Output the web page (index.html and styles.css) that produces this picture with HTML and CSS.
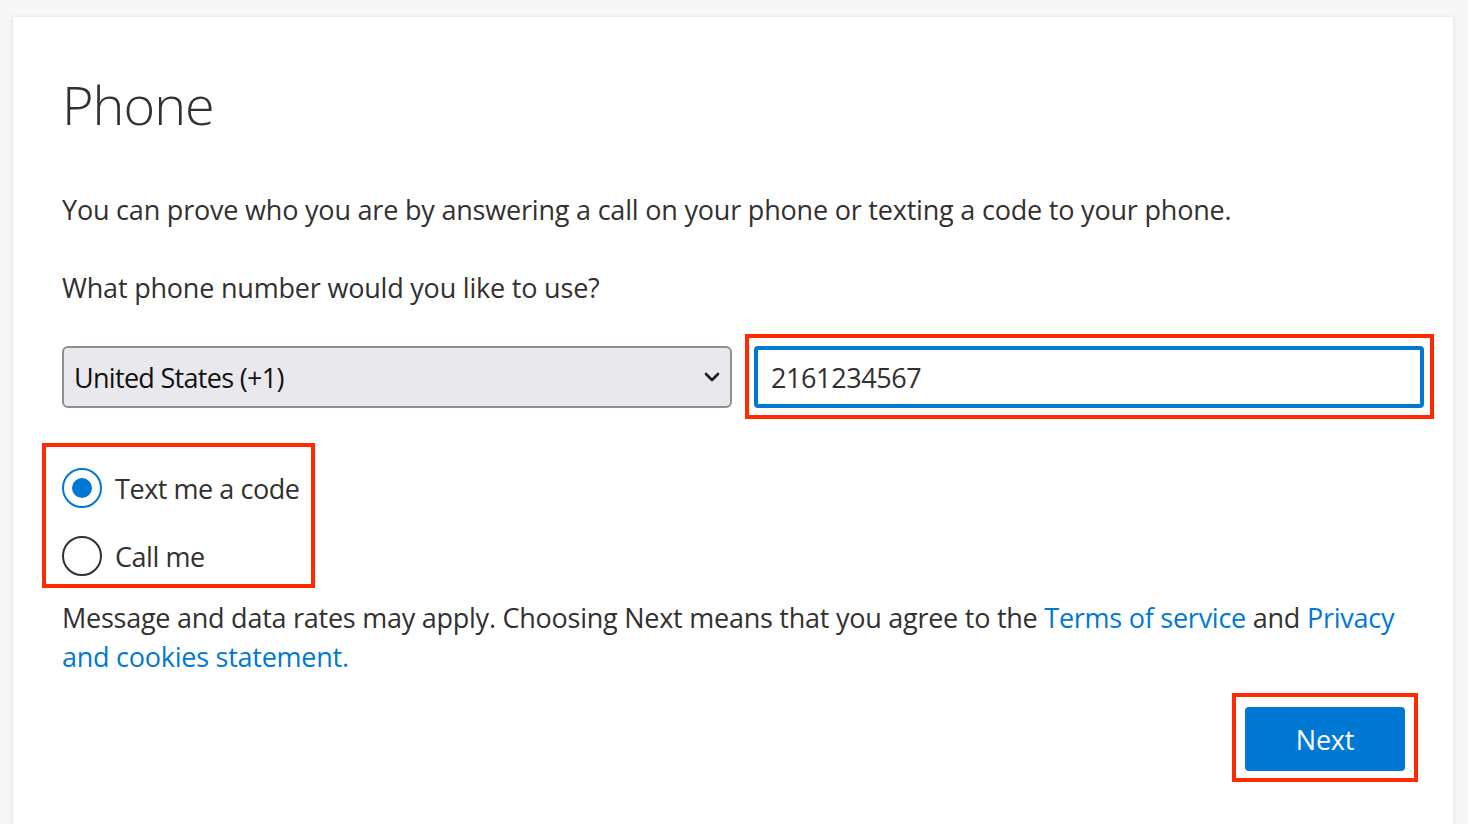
FILE: index.html
```html
<!DOCTYPE html>
<html lang="en">
<head>
<meta charset="utf-8">
<title>Phone</title>
<link rel="stylesheet" href="styles.css">
</head>
<body>
<main class="card">
  <h1 class="title">Phone</h1>
  <p class="text">You can prove who you are by answering a call on your phone or texting a code to your phone.</p>
  <p class="text question">What phone number would you like to use?</p>
  <div class="phone-row">
    <div class="select">
      <span class="select-value">United States (+1)</span>
      <svg class="chevron" width="16" height="10" viewBox="0 0 16 10" aria-hidden="true"><path d="M2 2 L8 8 L14 2" fill="none" stroke="#1b1b1b" stroke-width="2.6" stroke-linecap="round" stroke-linejoin="round"/></svg>
    </div>
    <div class="highlight highlight-input">
      <div class="input">2161234567</div>
    </div>
  </div>
  <div class="highlight highlight-radios">
    <div class="radios">
      <label class="radio-row"><span class="radio checked"></span><span class="radio-label">Text me a code</span></label>
      <label class="radio-row"><span class="radio"></span><span class="radio-label">Call me</span></label>
    </div>
  </div>
  <p class="text notice">Message and data rates may apply. Choosing Next means that you agree to the <a class="link" href="#">Terms of service</a> and <a class="link" href="#">Privacy and cookies statement.</a></p>
  <div class="actions">
    <div class="highlight highlight-button">
      <button class="button" type="button">Next</button>
    </div>
  </div>
</main>
</body>
</html>
```

FILE: styles.css
```css
* { box-sizing: border-box; }
html, body { margin: 0; padding: 0; }
body {
  background: #f7f7f7;
  font-family: "Open Sans", "Noto Sans", "Liberation Sans", sans-serif;
  color: #323130;
  width: 1468px;
  height: 824px;
  overflow: hidden;
}
.card {
  margin: 17px 15px 0 13px;
  height: 820px;
  background: #ffffff;
  box-shadow: 0 0 5px rgba(0, 0, 0, 0.10);
  padding: 55px 29px 0 49px;
}
.title {
  margin: 0;
  font-size: 54px;
  line-height: 64px;
  font-weight: 300;
  letter-spacing: -1px;
  color: #323130;
}
.text {
  margin: 54px 0 0;
  font-size: 27px;
  line-height: 39px;
  letter-spacing: -0.2px;
}
.question { margin-top: 39px; }
.phone-row {
  margin-top: 39px;
  display: flex;
  gap: 22px;
}
.select {
  width: 670px;
  height: 62px;
  border: 2px solid #8e8e96;
  border-radius: 6px;
  background: #e9e9ed;
  display: flex;
  align-items: center;
  justify-content: space-between;
  padding: 0 10px 0 10px;
  font-size: 27px;
  letter-spacing: -0.7px;
  color: #111;
}
.chevron { display: block; }
.highlight { position: relative; }
.highlight::after {
  content: "";
  position: absolute;
  border: 4px solid #ff2a00;
  pointer-events: none;
}
.highlight-input { width: 670px; }
.highlight-input::after { left: -9px; right: -10px; top: -12px; bottom: -11px; }
.input {
  height: 62px;
  border: 4px solid #0078d4;
  border-radius: 4px;
  display: flex;
  align-items: center;
  padding-left: 13px;
  font-size: 27px;
  letter-spacing: -0.4px;
  color: #323130;
}
.highlight-radios { margin-top: 60px; width: 240px; }
.highlight-radios::after { left: -20px; right: -13px; top: -25px; bottom: -12px; }
.radios { display: flex; flex-direction: column; gap: 28px; }
.radio-row {
  display: flex;
  align-items: center;
  gap: 13px;
  height: 40px;
  font-size: 27px;
  letter-spacing: -0.45px;
  white-space: nowrap;
}
.radio {
  width: 40px;
  height: 40px;
  border-radius: 50%;
  border: 2px solid #323130;
  display: flex;
  align-items: center;
  justify-content: center;
  flex: none;
}
.radio.checked { border-color: #0078d4; }
.radio.checked::before {
  content: "";
  width: 20px;
  height: 20px;
  border-radius: 50%;
  background: #0078d4;
}
.notice { margin-top: 22px; letter-spacing: -0.25px; }
.link { color: #0078d4; text-decoration: none; }
.actions {
  margin-top: 31px;
  display: flex;
  justify-content: flex-end;
  padding-right: 19px;
}
.highlight-button::after { left: -13px; right: -13px; top: -14px; bottom: -11px; }
.button {
  display: block;
  width: 160px;
  height: 64px;
  border: none;
  border-radius: 4px;
  background: #0078d4;
  color: #ffffff;
  font-family: inherit;
  font-size: 27px;
  font-weight: 500;
  letter-spacing: -0.2px;
}
```
